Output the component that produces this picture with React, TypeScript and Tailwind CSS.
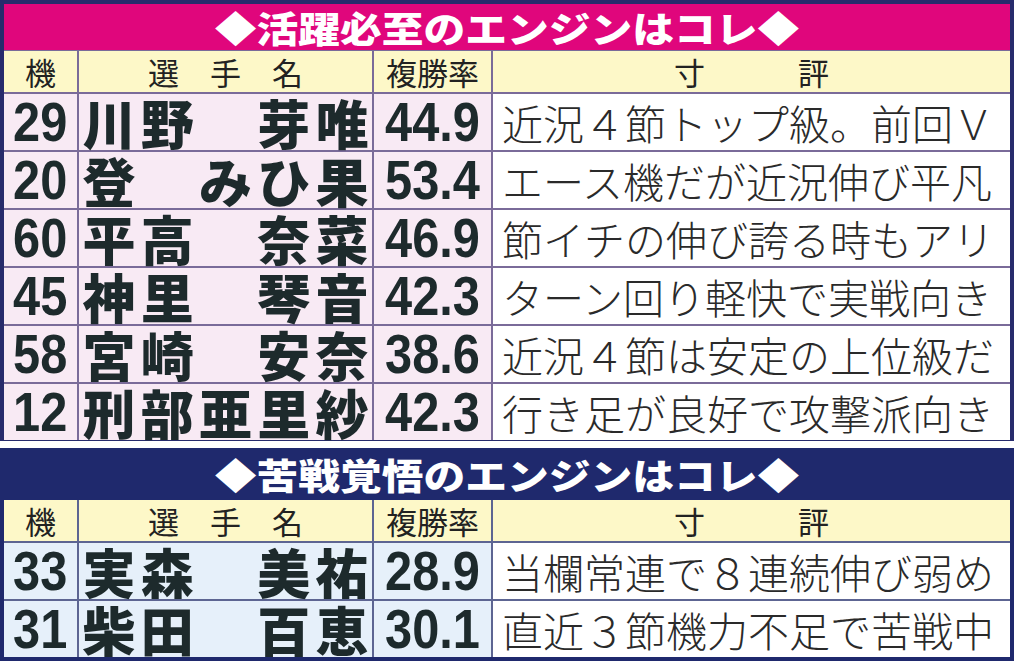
import React from "react";

type Row = { no: string; name: string; rate: string; comment: string };

const top: Row[] = [
  { no: "29", name: "川野　芽唯", rate: "44.9", comment: "近況４節トップ級。前回Ｖ" },
  { no: "20", name: "登　みひ果", rate: "53.4", comment: "エース機だが近況伸び平凡" },
  { no: "60", name: "平高　奈菜", rate: "46.9", comment: "節イチの伸び誇る時もアリ" },
  { no: "45", name: "神里　琴音", rate: "42.3", comment: "ターン回り軽快で実戦向き" },
  { no: "58", name: "宮崎　安奈", rate: "38.6", comment: "近況４節は安定の上位級だ" },
  { no: "12", name: "刑部亜里紗", rate: "42.3", comment: "行き足が良好で攻撃派向き" },
];

const bottom: Row[] = [
  { no: "33", name: "実森　美祐", rate: "28.9", comment: "当欄常連で８連続伸び弱め" },
  { no: "31", name: "柴田　百恵", rate: "30.1", comment: "直近３節機力不足で苦戦中" },
];

const CJK = "font-['Noto_Sans_CJK_JP',sans-serif]";
const NUM = "font-['Liberation_Sans','Noto_Sans_CJK_JP',sans-serif]";

function HeaderRow() {
  const cell =
    "bg-[#fdf8c8] flex items-center justify-center text-[31px] leading-none text-[#222] font-normal " + CJK;
  return (
    <>
      <div className={cell}>機</div>
      <div className={cell}>選　手　名</div>
      <div className={cell}>複勝率</div>
      <div className={cell}>寸　　　評</div>
    </>
  );
}

function DataRow({ r, tint }: { r: Row; tint: string }) {
  const num =
    "inline-block scale-x-[0.87] text-[56px] leading-[44px] font-bold text-[#1d2a2c] " + NUM;
  return (
    <>
      <div className={`${tint} flex items-center justify-center`}>
        <span className={num}>{r.no}</span>
      </div>
      <div className={`${tint} grid grid-cols-5 items-center px-[1px]`}>
        {Array.from(r.name).map((c, i) => (
          <span
            key={i}
            className={`text-center text-[53px] leading-[50px] font-black text-[#1d2a2c] ${CJK}`}
          >
            {c === "　" ? "\u00a0" : c}
          </span>
        ))}
      </div>
      <div className={`${tint} flex items-center justify-center`}>
        <span className={num}>{r.rate}</span>
      </div>
      <div className="bg-white flex items-center pl-[9px]">
        <span
          className={`whitespace-nowrap text-[41px] leading-[44px] font-light text-[#2a2a2a] ${CJK}`}
        >
          {r.comment}
        </span>
      </div>
    </>
  );
}

function Title({ text }: { text: string }) {
  return (
    <span
      className={`inline-block scale-x-[1.16] text-[36px] leading-[40px] font-black text-white ${CJK}`}
    >
      {text}
    </span>
  );
}

export default function App() {
  return (
    <div className="w-[1014px] h-[661px] overflow-hidden bg-[#272b6c]">
      {/* top block */}
      <div className="px-[4px] pt-[4px] pb-[1px]">
        <div className="h-[46px] bg-[#e0067c] flex items-center justify-center">
          <Title text="◆活躍必至のエンジンはコレ◆" />
        </div>
        <div className="grid grid-cols-[73px_293px_117px_1fr] grid-rows-[41px_repeat(6,56px)] gap-[2px] pt-[1px] bg-[#7a6b99]">
          <HeaderRow />
          {top.map((r, i) => (
            <DataRow key={i} r={r} tint="bg-[#f8eaf4]" />
          ))}
        </div>
      </div>
      <div className="h-[7px] bg-white" />
      {/* bottom block */}
      <div className="bg-[#1f296d] px-[4px] pb-[4px]">
        <div className="h-[52px] flex items-center justify-center">
          <Title text="◆苦戦覚悟のエンジンはコレ◆" />
        </div>
        <div className="grid grid-cols-[73px_293px_117px_1fr] grid-rows-[41px_repeat(2,56px)] gap-[2px] bg-[#5d6592]">
          <HeaderRow />
          {bottom.map((r, i) => (
            <DataRow key={i} r={r} tint="bg-[#e6f0fa]" />
          ))}
        </div>
      </div>
    </div>
  );
}
